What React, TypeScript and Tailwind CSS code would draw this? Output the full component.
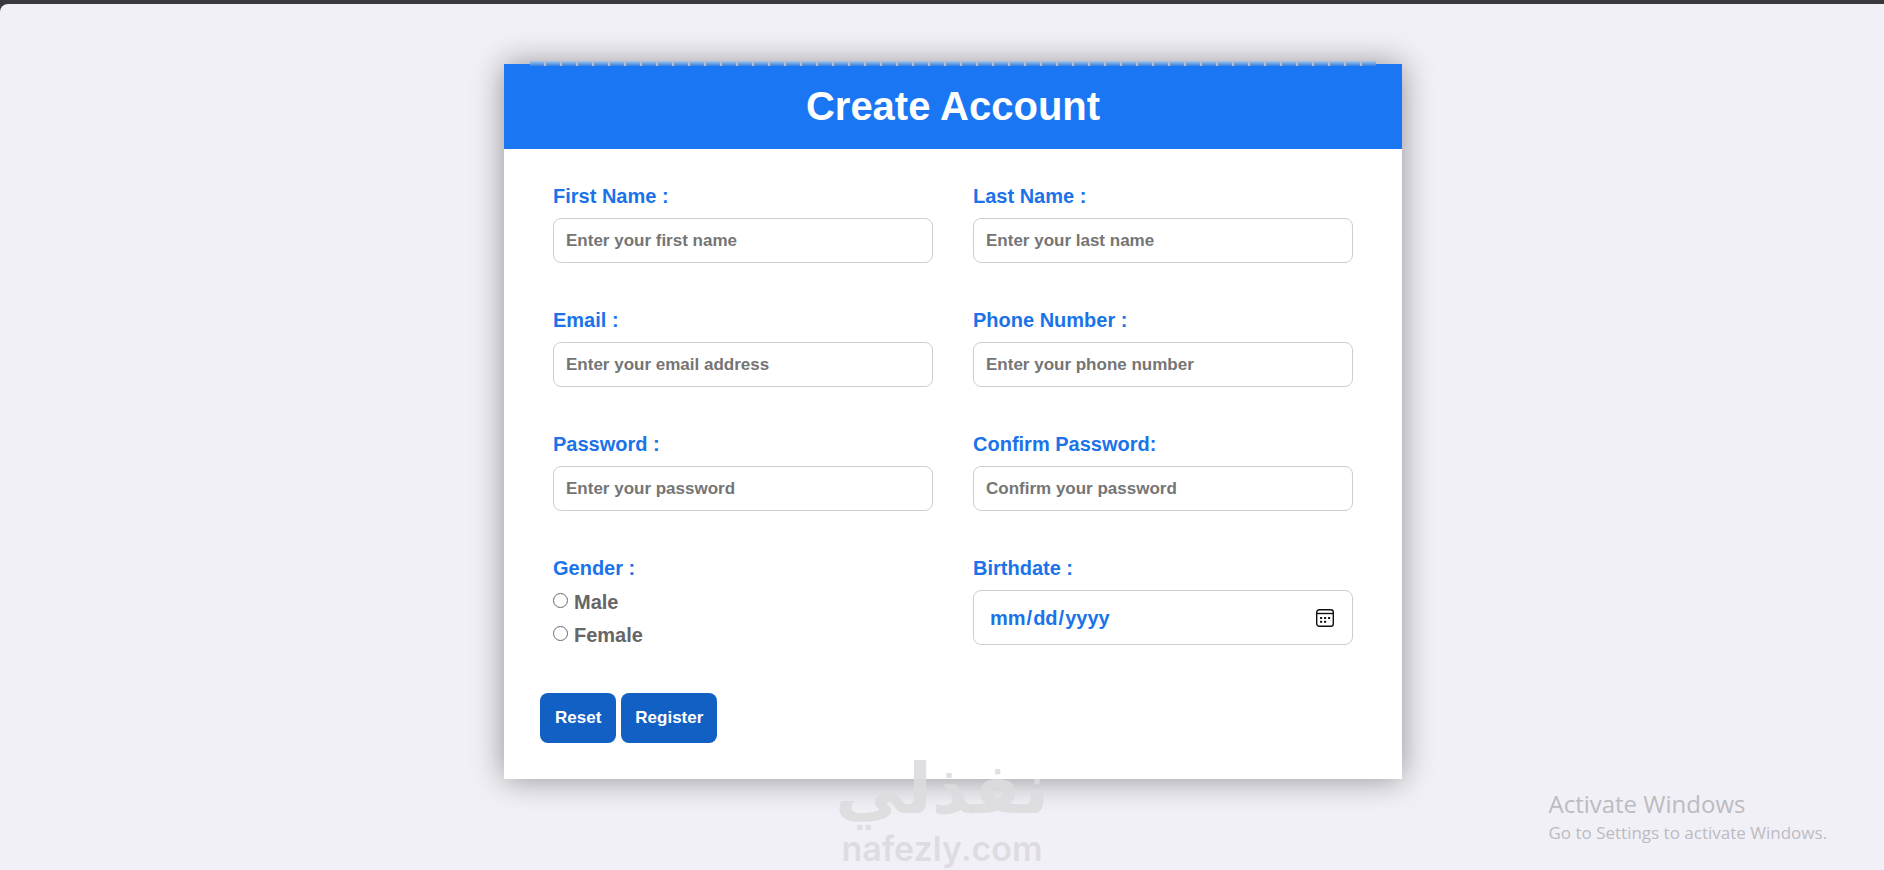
import React from "react";

type FieldProps = {
  id: string;
  label: string;
  type: string;
  placeholder: string;
};

const fields: FieldProps[] = [
  { id: "firstName", label: "First Name :", type: "text", placeholder: "Enter your first name" },
  { id: "lastName", label: "Last Name :", type: "text", placeholder: "Enter your last name" },
  { id: "email", label: "Email :", type: "email", placeholder: "Enter your email address" },
  { id: "phone", label: "Phone Number :", type: "tel", placeholder: "Enter your phone number" },
  { id: "password", label: "Password :", type: "password", placeholder: "Enter your password" },
  { id: "confirm", label: "Confirm Password:", type: "password", placeholder: "Confirm your password" },
];

function Field({ id, label, type, placeholder }: FieldProps) {
  return (
    <div className="flex flex-col gap-1">
      <label htmlFor={id} className="leading-[35px] text-[#1a73e8]">
        {label}
      </label>
      <input
        id={id}
        type={type}
        placeholder={placeholder}
        className="h-[45px] w-full rounded-lg border border-[#cfccd2] bg-white px-3 text-[17px] font-bold text-[#5f5f5f] placeholder:text-[#757575]"
      />
    </div>
  );
}

function Radio({ id, label }: { id: string; label: string }) {
  return (
    <div className="flex items-center gap-1.5">
      <input
        id={id}
        type="radio"
        name="gender"
        className="mb-1 size-[15px] appearance-none rounded-full border border-[#6b6b6b] bg-white checked:border-[5px] checked:border-[#1a73e8]"
      />
      <label htmlFor={id} className="leading-[33px] text-[#666666]">
        {label}
      </label>
    </div>
  );
}

function CalendarIcon() {
  return (
    <svg viewBox="0 0 18 18" className="size-[18px]" fill="none" aria-hidden="true">
      <rect x="0.7" y="0.7" width="16.6" height="16.6" rx="2.6" stroke="#101014" strokeWidth="1.4" />
      <path d="M0.7 4.5H17.3" stroke="#101014" strokeWidth="1.4" />
      <g fill="#101014">
        <rect x="4" y="8" width="2.1" height="2.1" rx="0.5" />
        <rect x="8" y="8" width="2.1" height="2.1" rx="0.5" />
        <rect x="12" y="8" width="2.1" height="2.1" rx="0.5" />
        <rect x="4" y="11.7" width="2.1" height="2.1" rx="0.5" />
        <rect x="8" y="11.7" width="2.1" height="2.1" rx="0.5" />
      </g>
    </svg>
  );
}

export default function App() {
  return (
    <div className="relative min-h-screen bg-[#3a383d] pt-1 font-['Liberation_Sans',Arial,sans-serif]">
      <div className="min-h-[calc(100vh-4px)] rounded-tl-lg bg-[#f1f0f6] pt-[60px] pr-4 pb-20 pl-[38px]">
        <main className="relative mx-auto max-w-[898px] bg-white text-xl font-bold shadow-[0_0_30px_rgba(0,0,0,0.4)]">
          <div className="absolute inset-x-[26px] -top-[3px] h-[5px] bg-[repeating-linear-gradient(90deg,transparent_0_14px,#b4c0c4_14px_16px),linear-gradient(#a9c8ec,#6fa4e6,#3a7cdc)]" />
          <h1 className="bg-[#1a76f2] py-5 text-center text-[40px] leading-[45px] text-white">
            Create Account
          </h1>
          <form className="px-9 pt-[30px] pb-9">
            <div className="grid grid-cols-2 gap-10 px-[13px]">
              {fields.map((f) => (
                <Field key={f.id} {...f} />
              ))}
              <fieldset>
                <legend className="leading-[35px] text-[#1a73e8]">Gender :</legend>
                <Radio id="male" label="Male" />
                <Radio id="female" label="Female" />
              </fieldset>
              <div className="flex flex-col gap-1">
                <label htmlFor="birthdate" className="leading-[35px] text-[#1a73e8]">
                  Birthdate :
                </label>
                <div className="relative">
                  <input
                    id="birthdate"
                    type="date"
                    className="h-[55px] w-full rounded-lg border border-[#cfccd2] bg-white px-[15px] font-bold text-[#1a73e8] [&::-webkit-calendar-picker-indicator]:opacity-0"
                  />
                  <span className="pointer-events-none absolute inset-y-0 right-[19px] flex items-center">
                    <CalendarIcon />
                  </span>
                </div>
              </div>
            </div>
            <div className="mt-[41px] flex gap-[5px] text-[17px] text-white">
              <button type="reset" className="h-[50px] rounded-lg bg-[#1360c4] px-[15px]">
                Reset
              </button>
              <button type="submit" className="h-[50px] rounded-lg bg-[#1360c4] px-3.5">
                Register
              </button>
            </div>
          </form>
        </main>
      </div>

      <div className="pointer-events-none absolute bottom-[3px] left-1/2 flex -translate-x-1/2 flex-col items-center text-[#dcdade]/90">
        <span dir="rtl" lang="ar" className="font-['DejaVu_Sans',sans-serif] text-[70px] leading-[84px] font-bold">
          نفذلي
        </span>
        <span className="font-['Inter',sans-serif] text-[34px] leading-9 font-semibold">nafezly.com</span>
      </div>

      <div className="pointer-events-none absolute right-[57px] bottom-6 font-['Open_Sans',sans-serif] text-[#bcbbc1]">
        <p className="text-2xl leading-8">Activate Windows</p>
        <p className="text-[17px] leading-[26px]">Go to Settings to activate Windows.</p>
      </div>
    </div>
  );
}
